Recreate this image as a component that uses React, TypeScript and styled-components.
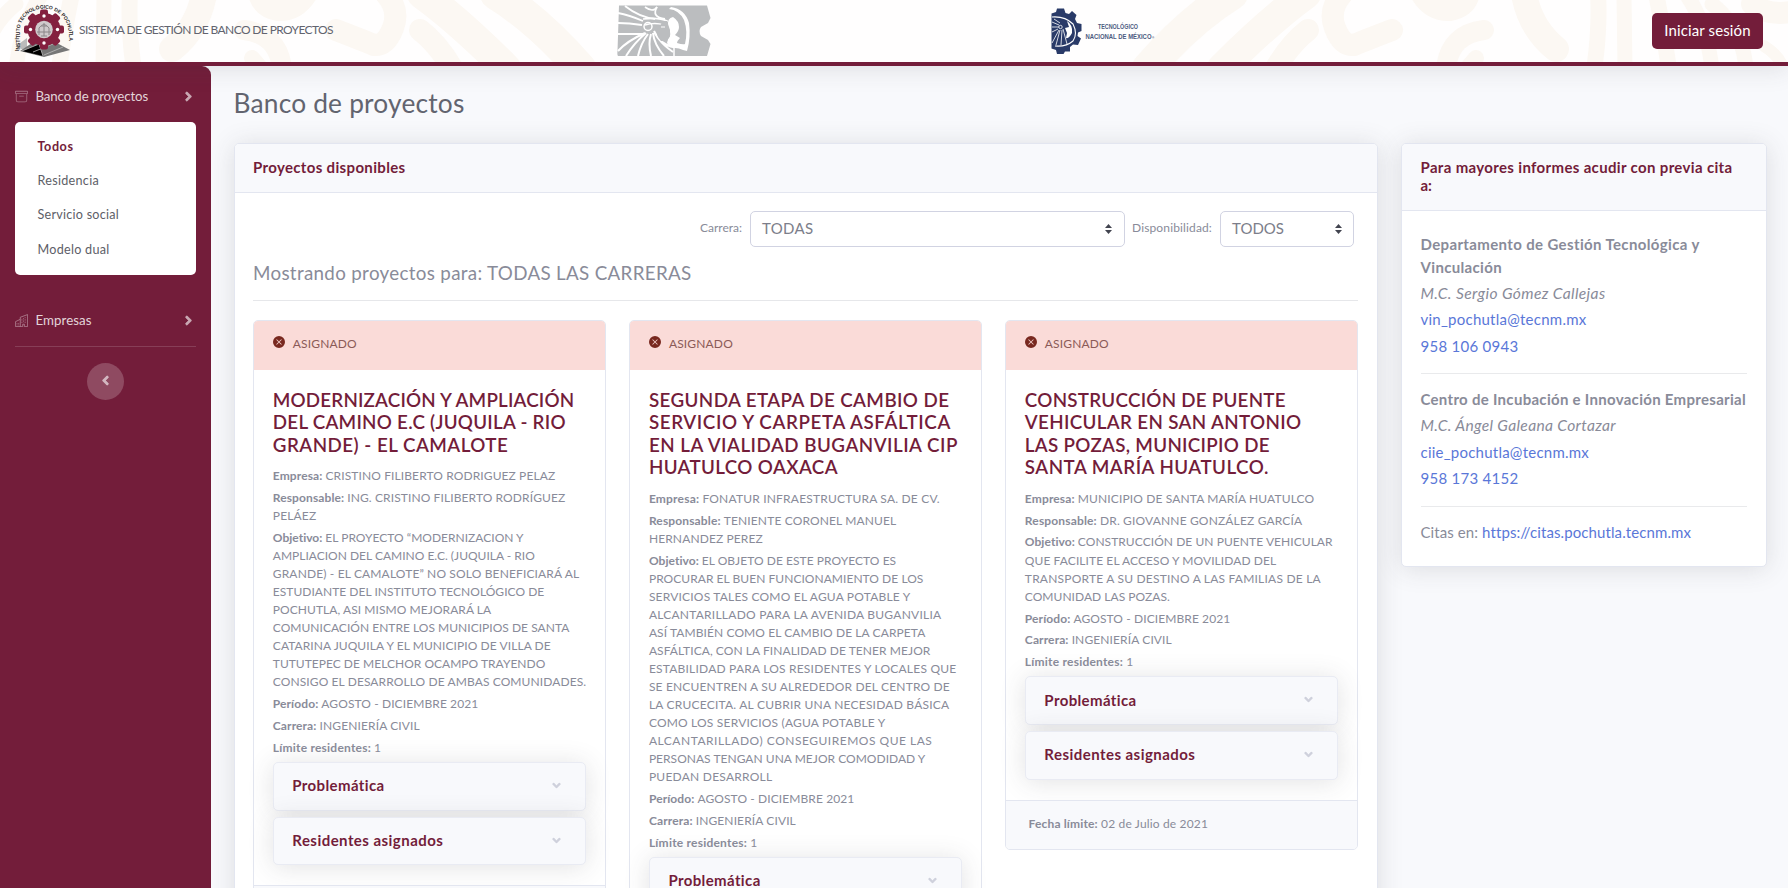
import React, { useLayoutEffect, useRef, useState } from "react";
import styled, { createGlobalStyle, css } from "styled-components";
import { BsArchive, BsXCircleFill } from "react-icons/bs";
import { FaAngleDown, FaAngleLeft, FaAngleRight } from "react-icons/fa";

const wine = "#731d3a";
const edge = "#e3e6f0";
const muted = "#898b99";
const shadow = "0 2px 26px 0 rgba(58, 59, 69, 0.15)";

const GlobalStyle = createGlobalStyle`
  *, *::before, *::after { box-sizing: border-box; }
  body {
    margin: 0;
    height: 888px;
    overflow: hidden;
    background: #f8f9fc;
    color: ${muted};
    font-family: Lato, "Liberation Sans", sans-serif;
    font-size: 15px;
    line-height: 22.6px;
  }
  h1, h2, h3, p { margin: 0; }
`;

/* ---------- Text line tracked to a measure ---------- */

const LineBox = styled.span`
  display: block;
  width: max-content;
  white-space: nowrap;
`;

function Line({ w, children }: { w: number; children: React.ReactNode }) {
  const ref = useRef<HTMLSpanElement>(null);
  const [tracking, setTracking] = useState(0);
  useLayoutEffect(() => {
    const el = ref.current;
    if (!el) return;
    const count = (el.textContent || "").length;
    const natural = el.getBoundingClientRect().width;
    if (count > 1) setTracking((t) => t + (w - natural) / count);
  }, [w]);
  return (
    <LineBox ref={ref} style={{ letterSpacing: tracking }}>
      {children}
    </LineBox>
  );
}

/* ---------- Header ---------- */

const TopBar = styled.header`
  position: relative;
  z-index: 2;
  display: flex;
  align-items: flex-start;
  height: 66px;
  background: #fffefe;
  border-bottom: 4px solid ${wine};
  box-shadow: ${shadow};
`;

const Pattern = styled.svg`
  position: absolute;
  inset: 0;
  width: 1788px;
  height: 62px;
`;

const Brand = styled.div`
  position: relative;
  display: flex;
  gap: 5px;
  width: 617px;
  padding: 2px 0 0 13px;
  font-size: 12px;
  color: #62646f;
`;

const BrandName = styled.div`
  padding-top: 17px;
`;

const Emblem = styled.svg`
  position: relative;
  flex: none;
`;

const CenterLogo = styled.div`
  position: relative;
  width: 434px;
  padding-top: 5px;
`;

const TecLogo = styled.div`
  position: relative;
  width: 601px;
  padding-top: 8px;
`;

const LoginButton = styled.button`
  position: relative;
  display: flex;
  justify-content: center;
  width: 111px;
  height: 36px;
  margin-top: 13px;
  padding: 6px 0 0;
  border: 0;
  border-radius: 5px;
  background: ${wine};
  color: #fff;
  font: 400 15px/22px Lato, sans-serif;
`;

function PatternSide() {
  return (
    <g fill="none" stroke="#fcf8f3" strokeLinecap="round">
      <path d="M1232 -6 Q1190 20 1148 68" strokeWidth="32" />
      <path d="M1306 -6 Q1270 20 1222 68" strokeWidth="30" />
      <path d="M1308 30 Q1290 44 1276 68" strokeWidth="22" />
      <path d="M1342 -6 Q1328 10 1335 28 Q1342 46 1354 45 Q1366 40 1392 30" strokeWidth="22" />
      <path d="M1418 -6 Q1430 14 1450 13 Q1468 10 1472 -6" strokeWidth="16" fill="#fcf8f3" />
      <path d="M1484 30 Q1450 34 1446 68" strokeWidth="20" />
      <path d="M1476 58 L1464 72" strokeWidth="16" />
      <path d="M1524 -6 Q1530 28 1556 49" strokeWidth="26" />
      <path d="M1598 -6 Q1600 30 1594 70" strokeWidth="16" />
      <path d="M1624 -6 L1625 70" strokeWidth="15" />
      <path d="M1656 -6 Q1664 30 1669 70" strokeWidth="16" />
      <path d="M1686 -6 Q1708 26 1712 70" strokeWidth="15" />
      <path d="M1712 4 Q1744 30 1746 70" strokeWidth="15" />
      <path d="M1752 4 Q1770 18 1800 10" strokeWidth="22" />
      <path d="M1764 46 Q1780 56 1784 70" strokeWidth="12" />
    </g>
  );
}

function CampusEmblem() {
  return (
    <Emblem width="61" height="56" viewBox="0 0 61 56">
      <defs>
        <path id="campusArc" d="M6.500 49 L6.500 30 A24.500 23.500 0 0 1 55.500 30 L55.500 52" />
      </defs>
      <path d="M3 44 L14 36 L14 50 Z" fill="#bbb" />
      <path d="M7 49 L22 39 H40 L57 48 L31 55 Z" fill="#777" />
      <path d="M9 49 L26 42 L30 54 M20 50 L40 42 M31 53 L50 45" stroke="#bbb" strokeWidth=".8" />
      <g fill="#84203f">
        <circle cx="31" cy="27.500" r="16.500" />
        {[0, 45, 90, 135, 180, 225, 270, 315].map((a) => (
          <rect key={a} x="27" y="7.500" width="8" height="8" rx="2" transform={`rotate(${a} 31 27.500)`} />
        ))}
      </g>
      <circle cx="31" cy="27.500" r="8.800" fill="#cfc9cb" />
      <path d="M26 33 V26 Q31 19 36 26 V33 M28 24 H34 M31 21 V34 M24 30 H38 M28 34 H34" stroke="#8b8588" strokeWidth="1" fill="none" />
      {[[31, 14], [31, 41], [17.5, 27.5], [44.5, 27.5]].map(([x, y]) => (
        <circle key={`${x}-${y}`} cx={x} cy={y} r="1.700" fill="#fff" />
      ))}
      <text fontFamily="Liberation Sans, sans-serif" fontWeight="700" fontSize="5" fill="#2d2a2c">
        <textPath href="#campusArc">INSTITUTO TECNOLÓGICO DE POCHUTLA</textPath>
      </text>
    </Emblem>
  );
}

function EagleEmblem() {
  return (
    <Emblem width="94" height="52" viewBox="0 0 94 52">
      <path d="M2 .5 H90 L93.5 13 L91 18 L84 22 Q81 26 84 31 L91 35 L93.5 39 L90 51 H1 Q0 50 .5 46 Z" fill="#bbbdbf" />
      <g fill="none" stroke="#fff">
        <path d="M1 8 Q12 10 26 16 M1 18 Q12 18 25 20 M1 29 H26 M8 1 Q22 12 38 14 M40 2 Q34 12 48 14" strokeWidth="1.8" />
        <path d="M26 14 Q42 12 50 16 L47 20 Q38 17 28 20" strokeWidth="1.6" />
        <path d="M28 28 Q10 36 1 46 M29 28 Q17 38 9 51 M31 29 Q24 38 21 51 M34 29 Q31 38 34 51 M36 28 Q37 39 47 51 M37 26 Q43 40 57 42 M42 34 Q46 40 56 47" strokeWidth="2" />
        <circle cx="31" cy="21.5" r="4" strokeWidth="1.5" />
        <path d="M28 2 Q36 8 40 2" strokeWidth="1.6" />
      </g>
      <path d="M54 2 Q68 4 72 18 Q74 32 70 46 L66 45 Q62 43 58 43 Q53 43 50 38 L51 34 Q54 31 53 27 L51 21 Q50 13 56 12 Q62 16 62 22 Q62 26 58 30 L63 33 Q60 36 60 38 Q66 40 68 39 Q71 26 67 15 Q62 5 52 4 Z" fill="#fff" />
      <path d="M46 16 L50 16 L53 25 L53 31 L50 36 H44 Q39 31 40 25 Z" fill="#bbbdbf" />
      <path d="M44 22 H48" stroke="#fff" strokeWidth="1" />
      <path d="M57 42 V51" stroke="#fff" strokeWidth="1.5" />
    </Emblem>
  );
}

function NationalEmblem() {
  return (
    <Emblem width="112" height="46" viewBox="0 0 112 46">
      <path
        fill="#293a68"
        d="M.5 5.500 L5 4 L6 .5 H13 L14.500 5 L18 6 L21 3 L25.500 7 L24 11 L26 15 L30.500 16 V23 L27 24.500 L26.500 28 L30 30.500 L27 37 L22 36.500 L19 39 V43.500 L14 43.500 L12.500 46 H6 L5 42 L.5 40.500 Z"
      />
      <g fill="none" stroke="#fff">
        <path d="M1 9 Q14 8 22 16 Q27 26 22 33 Q15 39 4 38" strokeWidth="1.1" />
        <path d="M1 14 L8 17 M1 19 H8 M1 24 L7 21 M3 11 L9 15 M8 22 L1 35 M9 22 L5 37 M11 22 L10 37 M12 21 L16 36" strokeWidth=".8" />
        <circle cx="9.500" cy="19" r="1.700" strokeWidth=".8" />
      </g>
      <path d="M16 13 Q22 17 21 25 Q18 31 15 30 L16 25 L14 20 L18 19 Z" fill="#fff" />
      <g fill="#4c5a80" fontFamily="Liberation Sans, sans-serif" fontWeight="700">
        <text x="47" y="21" fontSize="7.400" textLength="40" lengthAdjust="spacingAndGlyphs">TECNOLÓGICO</text>
        <text x="34.500" y="30.500" fontSize="7.400" textLength="66" lengthAdjust="spacingAndGlyphs">NACIONAL DE MÉXICO</text>
        <text x="101" y="30.500" fontSize="3">®</text>
      </g>
    </Emblem>
  );
}

/* ---------- Sidebar ---------- */

const Shell = styled.div`
  display: flex;
  height: 822px;
`;

const Sidebar = styled.nav`
  flex: none;
  display: flex;
  flex-direction: column;
  width: 210.5px;
  padding: 0 14.5px 0 15px;
  background: ${wine};
  border-top-right-radius: 9px;
`;

const NavItem = styled.div<{ $gap?: number }>`
  display: flex;
  align-items: center;
  height: 20px;
  margin-top: ${(p) => p.$gap ?? 20}px;
  font-size: 13.3px;
  line-height: 20px;
  color: rgba(255, 255, 255, 0.82);
`;

const NavIcon = styled.span`
  display: flex;
  width: 20.5px;
  opacity: 0.45;
`;

const NavArrow = styled.span`
  display: flex;
  margin-left: auto;
  opacity: 0.75;

  svg {
    stroke: currentColor;
    stroke-width: 14px;
  }
`;

const SubMenu = styled.div`
  display: flex;
  flex-direction: column;
  height: 153px;
  margin-top: 16px;
  padding: 7.500px 22.500px;
  border-radius: 5px;
  background: #fff;
`;

const SubItem = styled.a<{ $active?: boolean }>`
  height: 34.4px;
  font-size: 12.6px;
  line-height: 34.4px;
  color: #5d5e67;
  ${(p) =>
    p.$active &&
    css`
      color: ${wine};
      font-weight: 700;
    `}
`;

const SideRule = styled.div`
  height: 1px;
  margin-top: 16px;
  background: rgba(255, 255, 255, 0.15);
`;

const Collapse = styled.button`
  display: flex;
  align-items: center;
  justify-content: center;
  align-self: center;
  width: 37.6px;
  height: 37.6px;
  margin-top: 15.500px;
  padding: 0 1px 1px 0;
  border: 0;
  border-radius: 50%;
  background: rgba(255, 255, 255, 0.2);
  color: rgba(255, 255, 255, 0.6);

  svg {
    stroke: currentColor;
    stroke-width: 14px;
  }
`;

function SteppedBuilding() {
  return (
    <svg width="13" height="13" viewBox="0 0 16 16" fill="none" stroke="#fff">
      <path d="M.5 15.500 V9.500 L6.500 6.500 V4 L15.500 .7 V15.500 H11.500 V12.500 H9.500 V15.500 Z M6.500 6.500 V15.500" />
      <path d="M2.500 11 V14 M4.500 11 V14 M8.500 6 V11 M10.500 5 V11 M12.500 4 V11" strokeDasharray="1 1" />
    </svg>
  );
}

/* ---------- Main area ---------- */

const Content = styled.main`
  flex: 1;
  padding: 0 22px 0 23px;
`;

const PageTitle = styled.h1`
  padding-top: 20px;
  height: 77px;
  font-size: 26.300px;
  font-weight: 400;
  line-height: 34px;
  color: #62646f;
`;

const Columns = styled.div`
  display: flex;
  align-items: flex-start;
  gap: 23.500px;
`;

const Panel = styled.section<{ $width: number; $height?: number }>`
  flex: none;
  width: ${(p) => p.$width}px;
  height: ${(p) => (p.$height ? `${p.$height}px` : "auto")};
  background: #fff;
  border: 1px solid ${edge};
  border-radius: 5px;
  box-shadow: ${shadow};
`;

const PanelHead = styled.h2<{ $height: number }>`
  height: ${(p) => p.$height}px;
  padding: 14px 18.500px 0;
  border-bottom: 1px solid ${edge};
  border-radius: 4px 4px 0 0;
  background: #f8f9fc;
  font-size: 15px;
  font-weight: 700;
  line-height: 18px;
  color: ${wine};
`;

const PanelBody = styled.div`
  padding: 0 18.500px;
`;

const Filters = styled.div`
  display: flex;
  align-items: center;
  justify-content: flex-end;
  gap: 7.500px;
  margin-top: 18.600px;
  padding-right: 4px;
`;

const FilterLabel = styled.label`
  padding-bottom: 2px;
  font-size: 12px;
  line-height: 18px;
`;

const SelectBox = styled.div<{ $width: number }>`
  display: flex;
  align-items: center;
  justify-content: space-between;
  width: ${(p) => p.$width}px;
  height: 36px;
  padding: 0 11.500px 1px;
  border: 1px solid #d1d3e2;
  border-radius: 5px;
  background: #fff;
  font-size: 15px;
  color: #7c7e8a;
`;

const Heading = styled.h3`
  height: 53.400px;
  padding-top: 13.900px;
  border-bottom: 1px solid #e6e7ea;
  font-size: 18.800px;
  font-weight: 400;
  line-height: 24px;
`;

const CardGrid = styled.div`
  display: grid;
  grid-template-columns: repeat(3, 1fr);
  align-items: start;
  gap: 23px;
  margin-top: 19.300px;
`;

const Card = styled.article`
  border: 1px solid ${edge};
  border-radius: 5px;
  background: #fff;
`;

const CardStatus = styled.div`
  display: flex;
  gap: 8px;
  height: 49px;
  padding: 15.500px 18.800px 0;
  border-radius: 4px 4px 0 0;
  background: #fadbd8;
  color: #8b5a57;
  font-size: 12px;
  line-height: 16.500px;

  svg {
    color: #78281f;
  }
`;

const CardBody = styled.div`
  padding: 18.600px 18.800px 20px;
`;

const CardTitle = styled.h3`
  margin-bottom: 10.800px;
  font-size: 18.800px;
  font-weight: 600;
  line-height: 22.600px;
  color: ${wine};
`;

const Field = styled.p`
  margin-bottom: 3.800px;
  font-size: 12px;
  line-height: 18.060px;
`;

const Accordion = styled.div`
  display: flex;
  align-items: center;
  justify-content: space-between;
  height: 48.700px;
  margin-top: 6px;
  padding: 0 22.500px 1.500px 18.500px;
  border: 1px solid #e9ebf3;
  border-radius: 5px;
  background: #f8f9fc;
  box-shadow: ${shadow};
  font-size: 15px;
  font-weight: 700;
  color: ${wine};

  &:first-of-type {
    margin-top: 5px;
  }

  svg {
    color: #cfd1dc;
    stroke: currentColor;
    stroke-width: 14px;
  }
`;

const CardFoot = styled.footer`
  height: 49px;
  padding: 14.800px 22.500px 0;
  border-top: 1px solid ${edge};
  border-radius: 0 0 4px 4px;
  background: #f8f9fc;
  font-size: 12px;
  line-height: 18px;
`;

const Contact = styled.div<{ $first?: boolean }>`
  display: flex;
  flex-direction: column;
  gap: 3.800px;
  padding-top: ${(p) => (p.$first ? 22.5 : 14)}px;
`;

const Person = styled.em`
  font-size: 15.600px;
`;

const Link = styled.a`
  color: #5a77d8;
`;

const Rule = styled.div`
  height: 1px;
  margin-top: 15.700px;
  background: #e9eaec;
`;

function Sorter() {
  return (
    <svg width="7" height="10" viewBox="0 0 7 10" fill="#42444f">
      <path d="M0 4 L3.500 0 L7 4 Z M0 6 L3.500 10 L7 6 Z" />
    </svg>
  );
}

/* ---------- Data ---------- */

type TextLine = [string, number];
type Entry = { label: string; lines: TextLine[] };
type Project = { title: TextLine[]; entries: Entry[] };

const common: Entry[] = [
  { label: "Período:", lines: [["AGOSTO - DICIEMBRE 2021", 205.500]] },
  { label: "Carrera:", lines: [["INGENIERÍA CIVIL", 147]] },
  { label: "Límite residentes:", lines: [["1", 108.500]] },
];

const projects: Project[] = [
  {
    title: [
      ["MODERNIZACIÓN Y AMPLIACIÓN", 301.500],
      ["DEL CAMINO E.C (JUQUILA - RIO", 293],
      ["GRANDE) - EL CAMALOTE", 235.500],
    ],
    entries: [
      { label: "Empresa:", lines: [["CRISTINO FILIBERTO RODRIGUEZ PELAZ", 282.500]] },
      { label: "Responsable:", lines: [["ING. CRISTINO FILIBERTO RODRÍGUEZ", 292.500], ["PELÁEZ", 43.500]] },
      {
        label: "Objetivo:",
        lines: [
          ["EL PROYECTO “MODERNIZACION Y", 251],
          ["AMPLIACION DEL CAMINO E.C. (JUQUILA - RIO", 262],
          ["GRANDE) - EL CAMALOTE” NO SOLO BENEFICIARÁ AL", 306.500],
          ["ESTUDIANTE DEL INSTITUTO TECNOLÓGICO DE", 271.500],
          ["POCHUTLA, ASI MISMO MEJORARÁ LA", 218.500],
          ["COMUNICACIÓN ENTRE LOS MUNICIPIOS DE SANTA", 296.500],
          ["CATARINA JUQUILA Y EL MUNICIPIO DE VILLA DE", 278],
          ["TUTUTEPEC DE MELCHOR OCAMPO TRAYENDO", 272.500],
          ["CONSIGO EL DESARROLLO DE AMBAS COMUNIDADES.", 313.500],
        ],
      },
      ...common,
    ],
  },
  {
    title: [
      ["SEGUNDA ETAPA DE CAMBIO DE", 300.500],
      ["SERVICIO Y CARPETA ASFÁLTICA", 302],
      ["EN LA VIALIDAD BUGANVILIA CIP", 309],
      ["HUATULCO OAXACA", 189],
    ],
    entries: [
      { label: "Empresa:", lines: [["FONATUR INFRAESTRUCTURA SA. DE CV.", 291]] },
      { label: "Responsable:", lines: [["TENIENTE CORONEL MANUEL", 247.500], ["HERNANDEZ PEREZ", 114]] },
      {
        label: "Objetivo:",
        lines: [
          ["EL OBJETO DE ESTE PROYECTO ES", 247.500],
          ["PROCURAR EL BUEN FUNCIONAMIENTO DE LOS", 274.500],
          ["SERVICIOS TALES COMO EL AGUA POTABLE Y", 261.500],
          ["ALCANTARILLADO PARA LA AVENIDA BUGANVILIA", 292.500],
          ["ASÍ TAMBIÉN COMO EL CAMBIO DE LA CARPETA", 276.500],
          ["ASFÁLTICA, CON LA FINALIDAD DE TENER MEJOR", 281.500],
          ["ESTABILIDAD PARA LOS RESIDENTES Y LOCALES QUE", 307.500],
          ["SE ENCUENTREN A SU ALREDEDOR DEL CENTRO DE", 301],
          ["LA CRUCECITA. AL CUBRIR UNA NECESIDAD BÁSICA", 300.500],
          ["COMO LOS SERVICIOS (AGUA POTABLE Y", 236.500],
          ["ALCANTARILLADO) CONSEGUIREMOS QUE LAS", 283.500],
          ["PERSONAS TENGAN UNA MEJOR COMODIDAD Y", 276.500],
          ["PUEDAN DESARROLL", 123.500],
        ],
      },
      ...common,
    ],
  },
  {
    title: [
      ["CONSTRUCCIÓN DE PUENTE", 261],
      ["VEHICULAR EN SAN ANTONIO", 276.500],
      ["LAS POZAS, MUNICIPIO DE", 245],
      ["SANTA MARÍA HUATULCO.", 244],
    ],
    entries: [
      { label: "Empresa:", lines: [["MUNICIPIO DE SANTA MARÍA HUATULCO", 289.500]] },
      { label: "Responsable:", lines: [["DR. GIOVANNE GONZÁLEZ GARCÍA", 277.500]] },
      {
        label: "Objetivo:",
        lines: [
          ["CONSTRUCCIÓN DE UN PUENTE VEHICULAR", 308],
          ["QUE FACILITE EL ACCESO Y MOVILIDAD DEL", 251.500],
          ["TRANSPORTE A SU DESTINO A LAS FAMILIAS DE LA", 296],
          ["COMUNIDAD LAS POZAS.", 145],
        ],
      },
      ...common,
    ],
  },
];

function ProjectCard({ project }: { project: Project }) {
  return (
    <Card>
      <CardStatus>
        <BsXCircleFill size={12} />
        <Line w={64}>ASIGNADO</Line>
      </CardStatus>
      <CardBody>
        <CardTitle>
          {project.title.map(([text, w]) => (
            <Line key={text} w={w}>{text}</Line>
          ))}
        </CardTitle>
        {project.entries.map((entry) => (
          <Field key={entry.label}>
            {entry.lines.map(([text, w], i) => (
              <Line key={text} w={w}>
                {i === 0 && <b>{entry.label} </b>}
                {text}
              </Line>
            ))}
          </Field>
        ))}
        <Accordion>
          <Line w={92.500}>Problemática</Line>
          <FaAngleDown size={13} />
        </Accordion>
        <Accordion>
          <Line w={151}>Residentes asignados</Line>
          <FaAngleDown size={13} />
        </Accordion>
      </CardBody>
      <CardFoot>
        <Line w={179.500}>
          <b>Fecha límite:</b> 02 de Julio de 2021
        </Line>
      </CardFoot>
    </Card>
  );
}

export default function App() {
  return (
    <>
      <GlobalStyle />
      <TopBar>
        <Pattern viewBox="0 0 1788 62">
          <PatternSide />
          <g transform="translate(1728 0) scale(-1 1)">
            <PatternSide />
          </g>
        </Pattern>
        <Brand>
          <CampusEmblem />
          <BrandName>
            <Line w={254}>SISTEMA DE GESTIÓN DE BANCO DE PROYECTOS</Line>
          </BrandName>
        </Brand>
        <CenterLogo>
          <EagleEmblem />
        </CenterLogo>
        <TecLogo>
          <NationalEmblem />
        </TecLogo>
        <LoginButton>
          <Line w={86.500}>Iniciar sesión</Line>
        </LoginButton>
      </TopBar>
      <Shell>
        <Sidebar>
          <NavItem>
            <NavIcon><BsArchive size={13} /></NavIcon>
            <Line w={112.500}>Banco de proyectos</Line>
            <NavArrow><FaAngleRight size={15} /></NavArrow>
          </NavItem>
          <SubMenu>
            <SubItem $active><Line w={36}>Todos</Line></SubItem>
            <SubItem><Line w={61.500}>Residencia</Line></SubItem>
            <SubItem><Line w={81.500}>Servicio social</Line></SubItem>
            <SubItem><Line w={72}>Modelo dual</Line></SubItem>
          </SubMenu>
          <NavItem $gap={35}>
            <NavIcon><SteppedBuilding /></NavIcon>
            <Line w={56}>Empresas</Line>
            <NavArrow><FaAngleRight size={15} /></NavArrow>
          </NavItem>
          <SideRule />
          <Collapse><FaAngleLeft size={15} /></Collapse>
        </Sidebar>
        <Content>
          <PageTitle>
            <Line w={231}>Banco de proyectos</Line>
          </PageTitle>
          <Columns>
            <Panel $width={1144} $height={1200}>
              <PanelHead $height={48.700}>
                <Line w={152.500}>Proyectos disponibles</Line>
              </PanelHead>
              <PanelBody>
                <Filters>
                  <FilterLabel><Line w={42}>Carrera:</Line></FilterLabel>
                  <SelectBox $width={375}>
                    <Line w={51.500}>TODAS</Line>
                    <Sorter />
                  </SelectBox>
                  <FilterLabel><Line w={80}>Disponibilidad:</Line></FilterLabel>
                  <SelectBox $width={134.500}>
                    <Line w={52}>TODOS</Line>
                    <Sorter />
                  </SelectBox>
                </Filters>
                <Heading>
                  <Line w={438.500}>Mostrando proyectos para: TODAS LAS CARRERAS</Line>
                </Heading>
                <CardGrid>
                  {projects.map((p) => (
                    <ProjectCard key={p.title[0][0]} project={p} />
                  ))}
                </CardGrid>
              </PanelBody>
            </Panel>
            <Panel $width={365.500} $height={424}>
              <PanelHead $height={66.500}>
                <Line w={312}>Para mayores informes acudir con previa cita</Line>
                <Line w={11.500}>a:</Line>
              </PanelHead>
              <PanelBody>
                <Contact $first>
                  <b>
                    <Line w={279.500}>Departamento de Gestión Tecnológica y</Line>
                    <Line w={81.500}>Vinculación</Line>
                  </b>
                  <Person><Line w={185}>M.C. Sergio Gómez Callejas</Line></Person>
                  <Link><Line w={166}>vin_pochutla@tecnm.mx</Line></Link>
                  <Link><Line w={98}>958 106 0943</Line></Link>
                </Contact>
                <Rule />
                <Contact>
                  <b><Line w={325.500}>Centro de Incubación e Innovación Empresarial</Line></b>
                  <Person><Line w={195.500}>M.C. Ángel Galeana Cortazar</Line></Person>
                  <Link><Line w={168.500}>ciie_pochutla@tecnm.mx</Line></Link>
                  <Link><Line w={98}>958 173 4152</Line></Link>
                </Contact>
                <Rule />
                <Contact>
                  <Line w={270}>
                    Citas en: <Link>https://citas.pochutla.tecnm.mx</Link>
                  </Line>
                </Contact>
              </PanelBody>
            </Panel>
          </Columns>
        </Content>
      </Shell>
    </>
  );
}
